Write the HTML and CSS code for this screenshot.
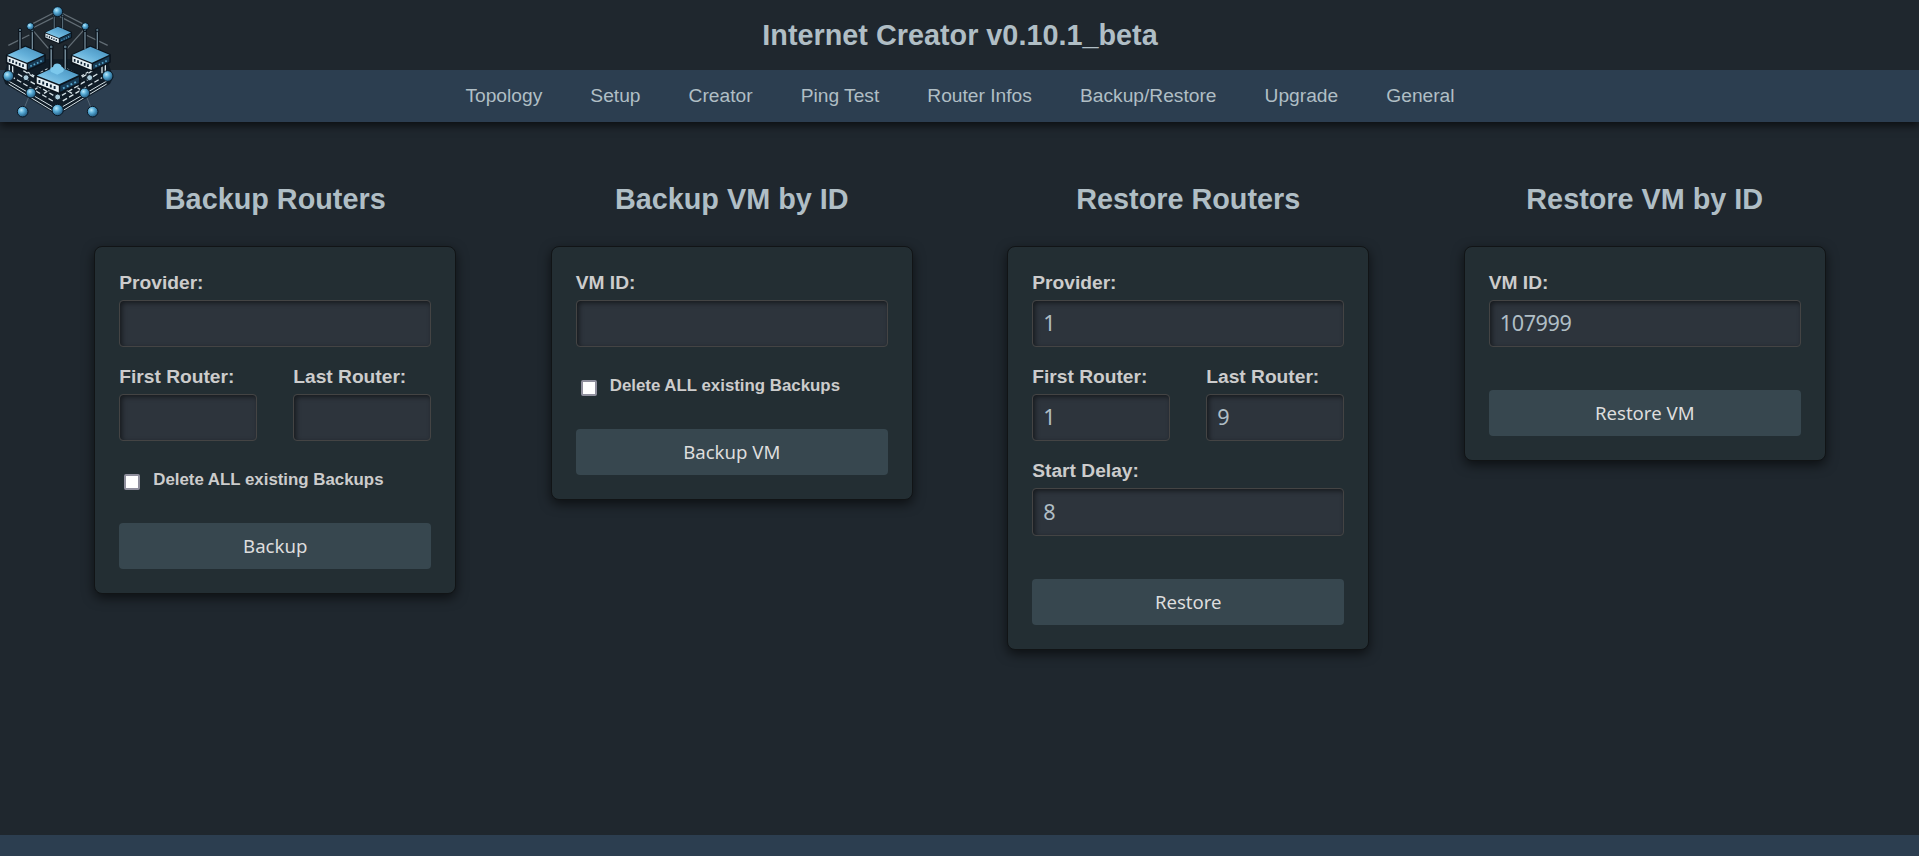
FILE: index.html
```html
<!DOCTYPE html>
<html lang="en">
<head>
<meta charset="utf-8">
<title>Internet Creator</title>
<link rel="stylesheet" href="styles.css">
</head>
<body>
<header class="header">
  <svg class="logo" viewBox="0 0 375 390" aria-hidden="true">
    <defs>
      <linearGradient id="face" x1="0" y1="1" x2="1" y2="0">
        <stop offset="0" stop-color="#9ad8f3"/><stop offset=".5" stop-color="#62aed8"/><stop offset="1" stop-color="#4189b5"/>
      </linearGradient>
      <radialGradient id="ball" cx=".38" cy=".35" r=".65">
        <stop offset="0" stop-color="#b9e8fa"/><stop offset=".45" stop-color="#55a9d4"/><stop offset="1" stop-color="#235a80"/>
      </radialGradient>
      <g id="router">
        <path d="M40 8V-52M77 8V-52" stroke="#0b141d" stroke-width="11"/>
        <path d="M0 24 56-3 115 22V44L62 70 0 47Z" fill="#0b141d" stroke="#0b141d" stroke-width="5" stroke-linejoin="round"/>
        <path d="M2 23 56-2 113 22 61 46Z" fill="url(#face)"/>
        <path d="M40 6V-50M77 6V-50" stroke="#718896" stroke-width="4"/>
        <circle cx="40" cy="-52" r="5" fill="#557180" stroke="#0b141d" stroke-width="3"/>
        <circle cx="77" cy="-52" r="5" fill="#557180" stroke="#0b141d" stroke-width="3"/>
        <path d="M2 27 60 50V68L2 44Z" fill="#e5eff4"/>
        <path d="M9 35v8m10-4v8m10-4v8m10-4v8m10-4v8" stroke="#102436" stroke-width="5"/>
        <path d="M64 50 113 27V43L64 66Z" fill="#173a54"/>
        <path d="M71 57l35-17" stroke="#58a7ce" stroke-width="5" stroke-dasharray="5 6"/>
      </g>
    </defs>
    <g fill="none" stroke="#626d75" stroke-width="4">
      <path d="M160 39 94 73M166 50 98 84M185 39 252 73M180 50 246 84M25 136 88 105M323 136 258 105M94 86 145 145M255 86 202 145"/>
    </g>
    <path d="M22 190 80 205 135 178H212L265 205 325 190 340 232 330 252 172 346 16 252 8 232Z" fill="#101c27"/>
    <g fill="none" stroke="#d5e1e6" stroke-width="4">
      <path d="M28 190v25M38 195v25M316 190v25M306 195v25"/>
      <path d="M24 242 157 320M26 252 157 332M322 242 188 320M320 252 188 332" stroke-width="3"/>
      <path d="M32 228 160 304M54 222 160 286M70 212 115 240M315 228 186 304M292 222 186 286M278 212 232 240" stroke-dasharray="15 7"/>
      <path d="M105 268 142 246M132 280 165 262M240 268 206 246M216 280 184 262M122 218 145 205M220 218 198 205M244 228 275 210M103 228 72 210" stroke-dasharray="9 6"/>
    </g>
    <path d="M88 286 72 326M258 286 274 326" stroke="#687986" stroke-width="2"/>
    <use href="#router" transform="translate(135 82) scale(.69)"/>
    <use href="#router" x="20" y="142"/>
    <use href="#router" x="215" y="142"/>
    <use href="#router" transform="translate(108 200) scale(1.14)"/>
    <path d="M153 216C149 209 151 202 159 201 161 186 182 188 185 200 192 202 194 211 188 216L172 224Z" fill="#7cc8ec"/>
    <g fill="url(#ball)" stroke="#0b1925" stroke-width="3">
      <circle cx="173" cy="35" r="15"/><circle cx="91" cy="79" r="11"/><circle cx="256" cy="79" r="11"/>
      <circle cx="25" cy="228" r="16"/><circle cx="323" cy="228" r="16"/>
      <circle cx="93" cy="279" r="15"/><circle cx="254" cy="279" r="15"/>
      <circle cx="173" cy="330" r="17"/><circle cx="68" cy="335" r="16"/><circle cx="278" cy="335" r="16"/>
    </g>
    <g fill="#a9cad9" stroke="#0b1925" stroke-width="3">
      <circle cx="78" cy="233" r="9"/><circle cx="269" cy="233" r="9"/><circle cx="173" cy="291" r="9"/>
    </g>
  </svg>
  <h1 class="title">Internet Creator v0.10.1_beta</h1>
  <nav class="nav">
    <a>Topology</a><a>Setup</a><a>Creator</a><a>Ping Test</a><a>Router Infos</a><a>Backup/Restore</a><a>Upgrade</a><a>General</a>
  </nav>
</header>

<main class="main">
  <section class="column">
    <h2 class="heading">Backup Routers</h2>
    <form class="card">
      <label class="field">Provider:<input class="input" type="text"></label>
      <div class="pair">
        <label class="field">First Router:<input class="input" type="text"></label>
        <label class="field">Last Router:<input class="input" type="text"></label>
      </div>
      <label class="check"><input class="checkbox" type="checkbox">Delete ALL existing Backups</label>
      <button class="button" type="button">Backup</button>
    </form>
  </section>

  <section class="column">
    <h2 class="heading">Backup VM by ID</h2>
    <form class="card">
      <label class="field">VM ID:<input class="input" type="text"></label>
      <label class="check"><input class="checkbox" type="checkbox">Delete ALL existing Backups</label>
      <button class="button" type="button">Backup VM</button>
    </form>
  </section>

  <section class="column">
    <h2 class="heading">Restore Routers</h2>
    <form class="card">
      <label class="field">Provider:<input class="input" type="text" value="1"></label>
      <div class="pair">
        <label class="field">First Router:<input class="input" type="text" value="1"></label>
        <label class="field">Last Router:<input class="input" type="text" value="9"></label>
      </div>
      <label class="field field-next">Start Delay:<input class="input" type="text" value="8"></label>
      <button class="button" type="button">Restore</button>
    </form>
  </section>

  <section class="column">
    <h2 class="heading">Restore VM by ID</h2>
    <form class="card">
      <label class="field">VM ID:<input class="input" type="text" value="107999"></label>
      <button class="button" type="button">Restore VM</button>
    </form>
  </section>
</main>
<footer class="footer"></footer>
</body>
</html>
```
FILE: styles.css
```css
* {
  box-sizing: border-box;
}

body {
  margin: 0;
  height: 856px;
  display: flex;
  flex-direction: column;
  overflow: hidden;
  background: #1f272e;
  color: #b0bec5;
  font-family: "Liberation Sans", Arial, sans-serif;
}

.header {
  position: relative;
  flex: none;
  box-shadow: 0 4px 8px rgba(0, 0, 0, 0.6);
}

.logo {
  position: absolute;
  left: 0;
  top: 0;
  width: 125px;
  height: 130px;
}

.title {
  margin: 0;
  height: 70px;
  padding: 19px 0 0 1px;
  font-size: 28.8px;
  line-height: 33px;
  text-align: center;
}

.nav {
  display: flex;
  justify-content: center;
  gap: 48.1px;
  height: 52px;
  padding-left: 1px;
  background: #2c3e50;
  font-size: 19.2px;
  line-height: 51px;
}

.main {
  flex: 1;
  display: grid;
  grid-template-columns: repeat(4, 1fr);
  align-items: start;
  padding: 61px 46px 0 47px;
}

.column {
  display: flex;
  flex-direction: column;
  align-items: center;
}

.heading {
  margin: 0 0 30px;
  font-size: 28.8px;
  line-height: 33px;
}

.card {
  width: 362px;
  padding: 24px;
  border: 1px solid #111416;
  border-radius: 8px;
  background: #232e33;
  box-shadow: 0 4px 12px rgba(0, 0, 0, 0.6);
  color: #ccc;
}

.field {
  display: flex;
  flex-direction: column;
  gap: 5px;
  font-size: 19.2px;
  font-weight: bold;
  line-height: 24px;
}

.pair {
  display: grid;
  grid-template-columns: 1fr 1fr;
  gap: 36px;
  margin-top: 18px;
}

.field-next {
  margin-top: 18px;
}

.input {
  width: 100%;
  height: 47px;
  padding: 0 10px 3px;
  border: 1px solid #444;
  border-radius: 4px;
  outline: 0;
  background: #2d343c;
  box-shadow: inset 2px 2px 5px rgba(0, 0, 0, 0.5);
  color: #b0bec5;
  font: 21.6px "Noto Sans", sans-serif;
  letter-spacing: -0.4px;
}

.field-next .input {
  height: 48px;
  padding-bottom: 2px;
}

.check {
  display: flex;
  gap: 13px;
  height: 20px;
  margin-top: 29px;
  padding-left: 5px;
  font-size: 16.85px;
  font-weight: bold;
  line-height: 20px;
}

.checkbox {
  appearance: none;
  width: 16px;
  height: 16px;
  margin: 4px 0 0;
  border: 2px solid #8f8f9d;
  border-radius: 2px;
  background: #fff;
}

.button {
  display: block;
  width: 100%;
  height: 46px;
  margin-top: 43px;
  padding: 0 0 1px;
  border: 0;
  border-radius: 4px;
  background: #37474f;
  color: #ddd;
  font: 18.6px "Noto Sans", sans-serif;
}

.check + .button {
  margin-top: 33px;
}

.footer {
  flex: none;
  height: 21px;
  background: #2c3e50;
}
```
